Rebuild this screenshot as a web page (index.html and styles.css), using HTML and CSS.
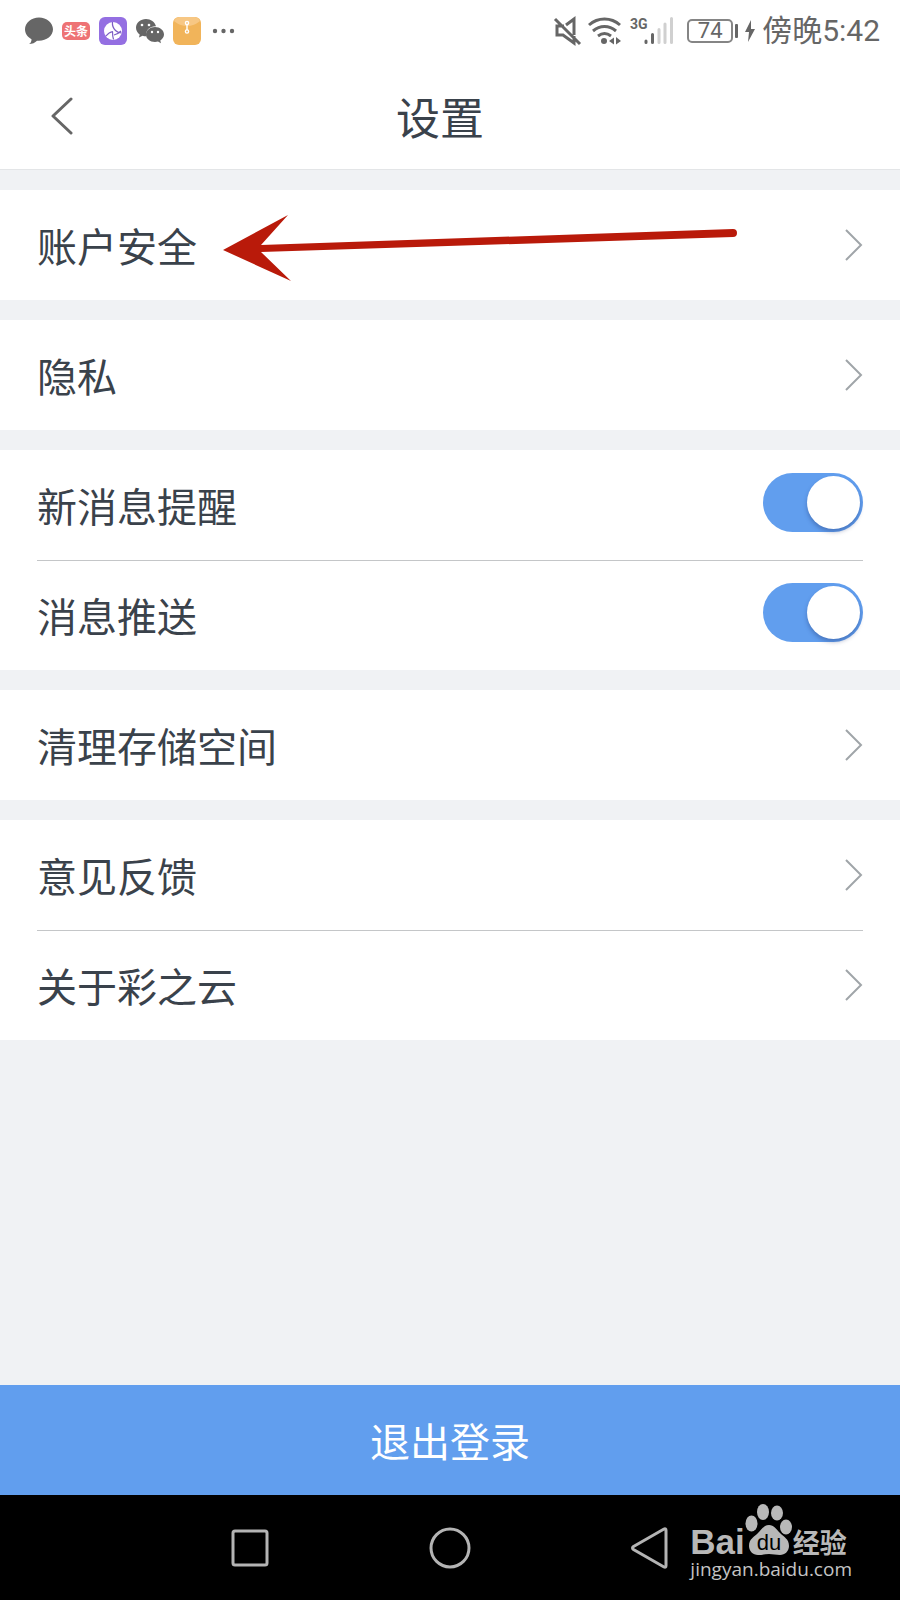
FILE: index.html
```html
<!DOCTYPE html>
<html lang="zh-CN">
<head>
<meta charset="utf-8">
<meta name="viewport" content="width=device-width, initial-scale=1">
<title>设置</title>
<link rel="stylesheet" href="styles.css">
</head>
<body>
<div class="screen">
  <div class="statusbar">
    <div class="status-left">
      <svg width="28" height="28" viewBox="0 0 28 28" aria-hidden="true"><path fill="#666" d="M14 0.500C6.300 .5 0 5.800 0 12.300c0 4.200 2.500 7.800 6.500 9.900C6.600 24.500 5.600 26 4 27c3.200 0 6.200-1.300 8-3.300 8.600.9 16-4.500 16-11.400C28 5.800 21.700.5 14 .5z"/></svg>
      <span class="toutiao">头条</span>
      <svg width="28" height="28" viewBox="0 0 28 28" aria-hidden="true"><rect width="28" height="28" rx="6" fill="#946fe2"/><circle cx="14" cy="14" r="9" fill="#fff"/><path d="M13.500 5c-.5 4 1 6.500 3 8.500s3.500 2.500 6 2.500M14 14.500c-3 .5-5.500 2.500-7 4.500M13.500 14.500c0 3 0 5 1 8M15 18c3-.5 5-2 7-4" fill="none" stroke="#7c5cc4" stroke-width="1.200"/></svg>
      <svg width="28" height="28" viewBox="0 0 28 28" aria-hidden="true"><path fill="#666" d="M10 2C4.500 2 0 5.800 0 10.700c0 2.800 1.500 5.200 3.700 6.800L3 20.500l3.500-1.800c1.300.4 2.500.6 4 .6-1.500-6 3.500-10.300 9.500-10C18.800 5 14.800 2 10 2z"/><path fill="#666" d="M19 10c-5 0-9 3.300-9 7.500s4 7.500 9 7.500c1.100 0 2.100-.2 3-.5l3 1.700-.7-2.800c2.200-1.400 3.700-3.500 3.700-5.900 0-4.200-4-7.500-9-7.500z"/><g fill="#fff"><circle cx="6" cy="8" r="1.300"/><circle cx="13" cy="8" r="1.300"/><circle cx="16" cy="15" r="1.200"/><circle cx="22" cy="15" r="1.200"/></g></svg>
      <svg width="28" height="28" viewBox="0 0 28 28" aria-hidden="true"><rect width="28" height="28" rx="6" fill="#f1b45a"/><path d="M1 4C3 0 6 0 8 0h12c2 0 5 0 7 4-3 3-9 5-13 5S4 7 1 4z" fill="#f7c784"/><g fill="none" stroke="#fff" stroke-width="1.400"><circle cx="14" cy="6" r="1.600"/><circle cx="14" cy="14.500" r="1.600"/><path d="M14 7.500v5.500"/></g></svg>
      <svg width="28" height="28" viewBox="0 0 28 28" aria-hidden="true"><g fill="#666"><circle cx="5" cy="14" r="2.200"/><circle cx="13.500" cy="14" r="2.200"/><circle cx="22" cy="14" r="2.200"/></g></svg>
    </div>
    <div class="status-right">
      <svg width="126" height="40" viewBox="552 10 126 40" role="img" aria-label="静音 Wi-Fi 3G">
        <path d="M567 24l8-6v16M565 25h-7v9h6l11 8v-7M556 18l25 25" fill="none" stroke="#666" stroke-width="3"/>
        <g fill="none" stroke="#666" stroke-width="3"><path d="M590 24c9-8 22-8 31 0M594 30c7-6 16-6 23 0M599 35c4-3 9-3 13 0"/></g>
        <circle cx="605" cy="40" r="3" fill="#666"/><path d="M610 40l5-3.500v7zM617 36l5 4-5 3.500z" fill="#666"/>
        <text x="631" y="28" class="net">3G</text>
        <g stroke-linecap="round" stroke-width="3"><path d="M647 40v1.500M653.500 33.500v8" stroke="#666"/><path d="M660 28.500v13M666 23v18.500M672.500 17.500v24" stroke="#d0d0d0"/></g>
      </svg>
      <span class="battery">74</span>
      <svg width="10" height="22" viewBox="0 0 10 22" aria-hidden="true"><path d="M6 0L0 12h4L3 22l7-13H6z" fill="#666"/></svg>
      <span class="clock">傍晚5:42</span>
    </div>
  </div>

  <header class="header">
    <button class="back" type="button" aria-label="返回"><svg width="22" height="38" viewBox="0 0 22 38" aria-hidden="true"><path d="M20 2L2 19l18 17" fill="none" stroke="#666" stroke-width="3" stroke-linecap="round" stroke-linejoin="round"/></svg></button>
    <h1 class="title">设置</h1>
  </header>

  <main class="groups">
    <section class="group">
      <a class="row" href="#account"><span>账户安全</span><svg class="chevron" viewBox="0 0 18 32" aria-hidden="true"><path d="M1 1l15 15L1 31"/></svg></a>
      <svg class="arrow" width="520" height="72" viewBox="220 212 520 72" aria-hidden="true"><path d="M223 250L288 215L261 245L733 229A4 4 0 0 1 733 237L261 252L291 281Z" fill="#b91a0a"/></svg>
    </section>
    <section class="group">
      <a class="row" href="#privacy"><span>隐私</span><svg class="chevron" viewBox="0 0 18 32" aria-hidden="true"><path d="M1 1l15 15L1 31"/></svg></a>
    </section>
    <section class="group">
      <div class="row"><label for="remind">新消息提醒</label><input class="switch" id="remind" type="checkbox" role="switch" checked></div>
      <div class="row"><label for="push">消息推送</label><input class="switch" id="push" type="checkbox" role="switch" checked></div>
    </section>
    <section class="group">
      <a class="row" href="#storage"><span>清理存储空间</span><svg class="chevron" viewBox="0 0 18 32" aria-hidden="true"><path d="M1 1l15 15L1 31"/></svg></a>
    </section>
    <section class="group">
      <a class="row" href="#feedback"><span>意见反馈</span><svg class="chevron" viewBox="0 0 18 32" aria-hidden="true"><path d="M1 1l15 15L1 31"/></svg></a>
      <a class="row" href="#about"><span>关于彩之云</span><svg class="chevron" viewBox="0 0 18 32" aria-hidden="true"><path d="M1 1l15 15L1 31"/></svg></a>
    </section>
  </main>

  <button class="logout" type="button">退出登录</button>

  <nav class="navbar">
    <button class="nav-recent" type="button" aria-label="最近任务"><svg width="44" height="44" viewBox="0 0 44 44" aria-hidden="true"><rect x="5" y="5" width="34" height="34" rx="2"/></svg></button>
    <button type="button" aria-label="主屏幕"><svg width="44" height="44" viewBox="0 0 44 44" aria-hidden="true"><circle cx="22" cy="22" r="19"/></svg></button>
    <button type="button" aria-label="返回上一页"><svg width="44" height="44" viewBox="0 0 44 44" aria-hidden="true"><path d="M5.500 20.500L36 3q2-1 2 1.500v35q0 2.500-2 1.500L5.500 23.500q-2-1.500 0-3z"/></svg></button>
    <div class="watermark">
      <div class="brand">
        <span class="brand-bai">Bai</span>
        <svg width="48" height="52" viewBox="0 0 48 52" role="img" aria-label="du"><g fill="#b8b8b8"><ellipse cx="6.500" cy="20.500" rx="6" ry="8"/><ellipse cx="18" cy="9" rx="6" ry="8"/><ellipse cx="32" cy="10" rx="6" ry="7.500"/><ellipse cx="41" cy="24" rx="6" ry="7.500"/><path d="M24 22c-5 0-7 4-11 8-4 4-9 6-9 13 0 5 4 9 9 9 4 0 7-1 11-1s7 1 11 1c5 0 9-4 9-9 0-7-5-9-9-13-4-4-6-8-11-8z"/></g><text x="24" y="47" text-anchor="middle" class="du">du</text></svg>
        <span class="brand-jy">经验</span>
      </div>
      <div class="url">jingyan.baidu.com</div>
    </div>
  </nav>
</div>
</body>
</html>
```
FILE: styles.css
```css
* { box-sizing: border-box; }

body {
  margin: 0;
  font-family: "Noto Sans CJK SC", sans-serif;
  color: #3a424b;
  background: #f0f2f4;
}

button {
  margin: 0;
  padding: 0;
  border: 0;
  background: none;
  font: inherit;
  cursor: pointer;
}

svg { display: block; flex: none; }

.screen {
  display: flex;
  flex-direction: column;
  min-height: 100vh;
}

.statusbar {
  display: flex;
  align-items: center;
  justify-content: space-between;
  height: 62px;
  padding: 0 20px 0 25px;
  background: #fff;
  color: #666;
}

.status-left { display: flex; align-items: center; gap: 9px; }
.status-right { display: flex; align-items: center; }

.toutiao {
  width: 28px;
  border-radius: 5px;
  background: #ee7375;
  color: #fff;
  font-size: 12px;
  font-weight: 700;
  line-height: 18px;
  text-align: center;
}

.net {
  font: 700 14px "Roboto", sans-serif;
  fill: #666;
}

.battery {
  position: relative;
  width: 46px;
  margin: 0 12px 0 10px;
  border: 2px solid #858585;
  border-radius: 5px;
  font: 22px/20px "Roboto", sans-serif;
  text-align: center;
}

.battery::after {
  content: "";
  position: absolute;
  top: 3px;
  right: -7px;
  width: 3px;
  height: 14px;
  border-radius: 1px;
  background: #666;
}

.clock {
  margin-left: 7px;
  font: 30px/40px "Roboto", "Noto Sans CJK SC", sans-serif;
}

.header {
  display: grid;
  grid-template-columns: 80px 1fr 100px;
  align-items: center;
  height: 108px;
  border-bottom: 1px solid #e3e5e7;
  background: #fff;
}

.back { justify-self: end; padding: 0 7px; }

.title {
  margin: 0;
  font-size: 44px;
  font-weight: 400;
  line-height: 60px;
  text-align: center;
}

.groups {
  display: flex;
  flex-direction: column;
  gap: 20px;
  padding: 20px 0;
}

.group {
  position: relative;
  padding: 0 37px;
  background: #fff;
}

.row {
  display: flex;
  align-items: center;
  justify-content: space-between;
  height: 110px;
  padding-bottom: 1px;
  color: inherit;
  font-size: 40px;
  line-height: 60px;
  text-decoration: none;
}

.row + .row { border-top: 1px solid #c4c6c8; }

.chevron {
  width: 18px;
  height: 32px;
  fill: none;
  stroke: #a0a5a9;
  stroke-width: 2;
}

.arrow {
  position: absolute;
  top: 22px;
  left: 220px;
  pointer-events: none;
}

.switch {
  appearance: none;
  width: 100px;
  height: 59px;
  margin: 0 0 5px;
  padding: 3px;
  border-radius: 30px;
  background: #c4c6c8;
  cursor: pointer;
}

.switch::before {
  content: "";
  display: block;
  width: 53px;
  height: 53px;
  border-radius: 50%;
  background: #fff;
  box-shadow: 0 3px 4px rgba(30, 50, 110, 0.35);
}

.switch:checked { background: #619eee; }
.switch:checked::before { margin-left: auto; }

.logout {
  height: 110px;
  margin-top: auto;
  background: #619eee;
  color: #fff;
  font-size: 40px;
  line-height: 60px;
}

.navbar {
  position: relative;
  display: grid;
  grid-template-columns: 3fr 4fr 4fr 4fr 3fr;
  align-items: center;
  justify-items: center;
  height: 105px;
  background: #000;
}

.navbar svg { fill: none; stroke: #b4b4b4; stroke-width: 3; }
.nav-recent { grid-column: 2; }

.watermark {
  position: absolute;
  top: 8px;
  right: 48px;
  color: #b8b8b8;
}

.watermark svg { stroke: none; }

.brand { display: flex; align-items: flex-end; height: 52px; }

.brand-bai {
  font: 700 35px/26px "Liberation Sans", sans-serif;
}

.brand-jy {
  font-size: 27px;
  font-weight: 700;
  line-height: 26px;
}

.du {
  font: 22px "Liberation Sans", sans-serif;
  fill: #000;
}

.url {
  color: #c4c4c4;
  font: 19px/28px "Open Sans", sans-serif;
}
```
